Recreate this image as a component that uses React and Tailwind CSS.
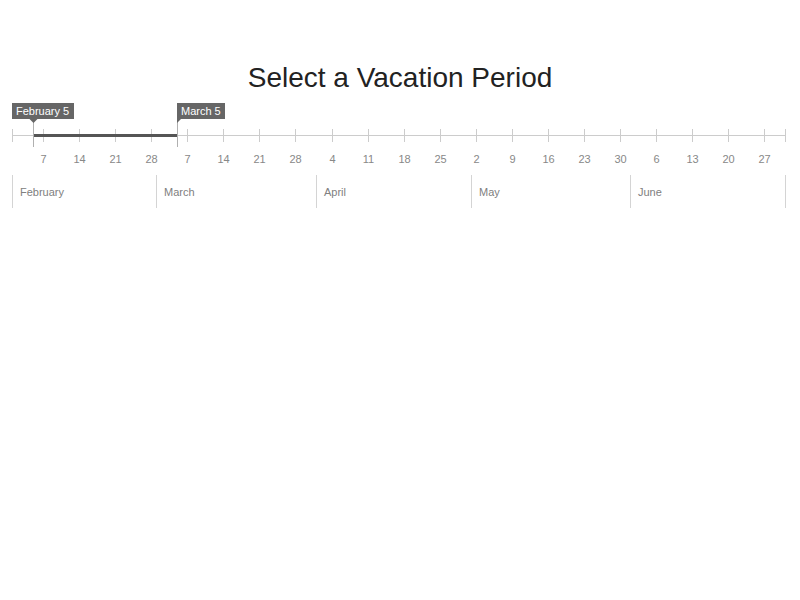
import React from "react";

const X0 = 12;
const X1 = 785;
const DAYS = 150;
const dx = (d) => X0 + (d * (X1 - X0)) / DAYS;

const ticks = [];
const monthStarts = [0, 28, 59, 89, 120];
for (let d = 6; d <= 146; d += 7) {
  let m = 0;
  while (m + 1 < monthStarts.length && d >= monthStarts[m + 1]) m++;
  ticks.push({ d, label: d - monthStarts[m] + 1 });
}

const months = [
  { name: "February", start: 0 },
  { name: "March", start: 28 },
  { name: "April", start: 59 },
  { name: "May", start: 89 },
  { name: "June", start: 120 },
];

const Timeline = () => {
  const a = Math.round(dx(4));
  const b = Math.round(dx(32));
  return (
    <svg width="800" height="120" className="block" style={{ fontFamily: '"Liberation Sans", Arial, sans-serif' }} shapeRendering="crispEdges">
      {/* axis */}
      <line x1={X0} x2={X1 + 1} y1={35.5} y2={35.5} stroke="#cccccc" />
      <line x1={X0 + 0.5} x2={X0 + 0.5} y1={29} y2={42} stroke="#cccccc" />
      <line x1={X1 + 0.5} x2={X1 + 0.5} y1={29} y2={42} stroke="#cccccc" />
      {ticks.map((t) => {
        const x = Math.round(dx(t.d)) + 0.5;
        return (
          <g key={t.d}>
            <line x1={x} x2={x} y1={29} y2={42} stroke="#cccccc" />
            <text x={x} y={63} textAnchor="middle" fontSize="11" fill="#888888">{t.label}</text>
          </g>
        );
      })}
      {/* selection */}
      <rect x={a} y={34} width={b - a} height={3} fill="#555555" />
      <line x1={a + 0.5} x2={a + 0.5} y1={21} y2={47} stroke="#b0b0b0" />
      <line x1={b + 0.5} x2={b + 0.5} y1={19} y2={47} stroke="#b0b0b0" />
      {/* start label */}
      <rect x={12} y={3} width={62} height={16} fill="#666666" />
      <polygon points={`${a - 3.5},19 ${a + 4.5},19 ${a + 0.5},23`} fill="#666666" shapeRendering="auto" />
      <text x={16} y={15} fontSize="11" fill="#ffffff">February 5</text>
      {/* end label */}
      <rect x={b} y={3} width={48} height={16} fill="#666666" />
      <polygon points={`${b},19 ${b + 4},19 ${b},23`} fill="#666666" shapeRendering="auto" />
      <text x={b + 4} y={15} fontSize="11" fill="#ffffff">March 5</text>
      {/* months */}
      {months.map((m) => {
        const x = Math.round(dx(m.start)) + 0.5;
        return (
          <g key={m.name}>
            <line x1={x} x2={x} y1={75} y2={108} stroke="#d4d4d4" />
            <text x={x + 7.5} y={96} fontSize="11" fill="#808080">{m.name}</text>
          </g>
        );
      })}
      <line x1={X1 + 0.5} x2={X1 + 0.5} y1={75} y2={108} stroke="#d4d4d4" />
    </svg>
  );
};

export default function App() {
  return (
    <div className="w-[800px] h-[600px] bg-white" style={{ fontFamily: '"Liberation Sans", Arial, sans-serif' }}>
      <div className="h-[100px] flex flex-col justify-end pb-[6px]">
        <h1 className="text-center text-[28px] leading-[32px] text-[#222222]">Select a Vacation Period</h1>
      </div>
      <Timeline />
    </div>
  );
}
